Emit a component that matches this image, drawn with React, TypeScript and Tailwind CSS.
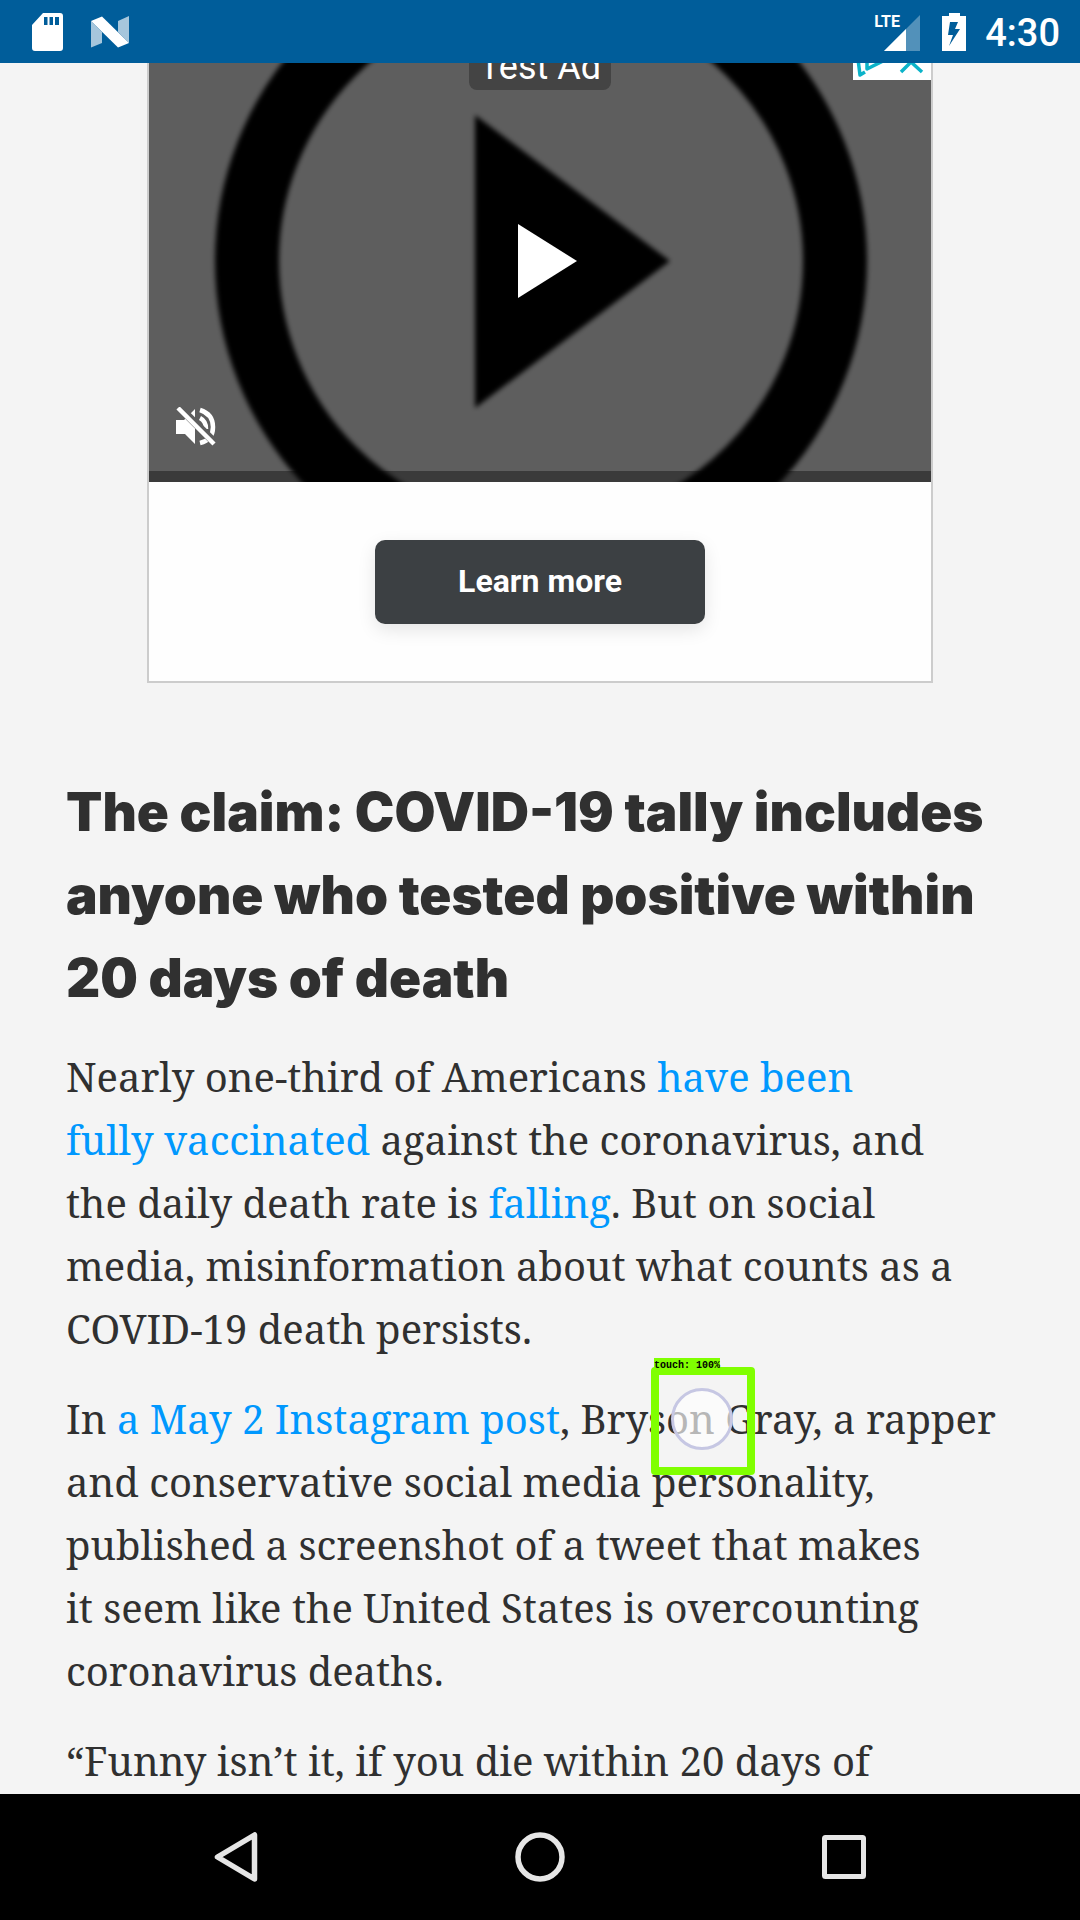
import React from 'react';

const link = 'text-[#0098fe]';

function StatusBar() {
  return (
    <header className="flex h-[63px] shrink-0 items-center justify-between bg-[#005d9a] pr-5 pl-8 text-white">
      <div className="flex items-center gap-7">
        <svg viewBox="0 0 31 38" className="h-[38px] w-[31px]" fill="currentColor" role="img" aria-label="SD card">
          <path
            fillRule="evenodd"
            d="M11 0H28Q31 0 31 3V35Q31 38 28 38H3Q0 38 0 35V12ZM12 4V12H15.500V4ZM17.500 4V12H21V4ZM23 4V12H27V4Z"
          />
        </svg>
        <svg viewBox="0 0 38 32" className="h-8 w-[38px]" fill="currentColor" role="img" aria-label="Android N">
          <path d="M0 5L11 16V27L0 31.500Z" opacity=".65" />
          <path d="M38 0V27L27 16V5Z" opacity=".65" />
          <path d="M0 5L11 0.500L38 27L27 31.500Z" />
        </svg>
      </div>
      <div className="flex items-center">
        <div className="relative h-[38px] w-[46px]">
          <svg viewBox="0 0 36 36" className="absolute right-0 bottom-0 h-9 w-9" fill="currentColor" aria-hidden="true">
            <path d="M36 0V36H0Z" opacity=".32" />
            <path d="M22 14V36H0Z" />
          </svg>
          <span className="absolute top-0 left-0 font-['Liberation_Sans_Narrow',Roboto,sans-serif] text-[16px] leading-[18px] font-bold">
            LTE
          </span>
        </div>
        <svg viewBox="0 0 24 38" className="ml-[22px] h-[38px] w-6" fill="currentColor" role="img" aria-label="Battery charging">
          <path fillRule="evenodd" d="M7 0H18V3H24V38H0V3H7ZM8 9L6 22H11L7 33L18 16H13L16 9Z" />
        </svg>
        <time className="ml-[19px] pt-0.5 font-[Roboto,sans-serif] text-[38px] leading-[44px] font-medium">4:30</time>
      </div>
    </header>
  );
}

function AdCard() {
  return (
    <section aria-label="Advertisement" className="mx-auto w-full max-w-[786px] border-x-2 border-b-2 border-[#cccccc] bg-[#fefefe]">
      <div className="relative h-[419px] overflow-hidden bg-[#5e5e5e]">
        <svg viewBox="0 0 782 419" className="h-full w-full" aria-hidden="true">
          <defs>
            <filter id="soft" x="-10%" y="-10%" width="120%" height="120%">
              <feGaussianBlur stdDeviation="2.5" />
            </filter>
          </defs>
          <path d="M0 408H782V419H0Z" fill="#3a3a3a" />
          <g filter="url(#soft)">
            <circle cx="392" cy="198" r="294" fill="none" stroke="#000" strokeWidth="64" />
            <path d="M326 52V345L521 198Z" />
          </g>
        </svg>
        <span className="absolute top-0 left-1/2 flex h-[27px] w-[142px] -translate-x-1/2 items-end justify-center rounded-b-lg bg-[#444444] font-[Roboto,sans-serif] text-[36px] leading-[46px] whitespace-nowrap text-white">
          Test Ad
        </span>
        <button type="button" aria-label="Ad choices" className="absolute top-0 right-0 h-[17px] w-[78px] bg-white text-[#0bb3c9]">
          <svg viewBox="0 0 78 17" className="h-full w-full" fill="none" stroke="currentColor" strokeWidth="3.500">
            <path d="M5 -4L7 12L12 9M14 -4V6L32 -3" strokeLinejoin="round" />
            <path d="M48 9L58 -1L69 9" />
          </svg>
        </button>
        <button type="button" aria-label="Play" className="absolute top-[161px] left-[369px] text-white">
          <svg viewBox="0 0 59 74" className="h-[74px] w-[59px]" fill="currentColor">
            <path d="M0 0L59 37L0 74Z" />
          </svg>
        </button>
        <button type="button" aria-label="Unmute" className="absolute bottom-[35px] left-[27px] text-white">
          <svg viewBox="0 0 40 40" className="h-10 w-10" fill="currentColor">
            <path d="M0 13H8L19 2V37L9 27H0Z" />
            <g fill="none" stroke="currentColor" strokeWidth="4.500">
              <path d="M24 3Q37 7 37 20Q37 33 24 36" />
              <path d="M24 11Q30 14 30 22" />
            </g>
            <path d="M3 0L39 36" stroke="#5e5e5e" strokeWidth="8" />
            <path d="M2 1L38 37" stroke="currentColor" strokeWidth="4.500" />
          </svg>
        </button>
      </div>
      <div className="flex justify-center pt-[58px] pb-[57px]">
        <button
          type="button"
          className="h-[84px] w-[330px] rounded-[10px] bg-[#3c4043] pb-0.5 font-[Roboto,sans-serif] text-[32px] leading-10 font-bold text-white shadow-[0_6px_18px_rgba(0,0,0,0.1)]"
        >
          Learn more
        </button>
      </div>
    </section>
  );
}

function TouchMarker() {
  return (
    <div className="absolute top-[1304px] left-[651px] h-[108px] w-[104px] rounded-sm border-8 border-[#80ff00]">
      <span className="absolute -top-[17px] -left-[5px] bg-[#80ff00] pt-0.5 font-['Liberation_Mono',monospace] text-[10px] leading-3 font-bold whitespace-nowrap text-black">
        touch: 100%
      </span>
      <div className="absolute top-[13px] left-3 h-[62px] w-[62px] rounded-full border-[3px] border-[#c6c7e3] bg-white/65" />
    </div>
  );
}

function Article() {
  return (
    <article className="px-[66px] pt-[88px] text-[#303030]">
      <h2 className="mb-[25px] font-[Inter,sans-serif] text-[53px] leading-[83px] font-black whitespace-nowrap">
        The claim: COVID-19 tally includes
        <br />
        anyone who tested positive within
        <br />
        20 days of death
      </h2>
      <div className="flex flex-col gap-[27px] font-['Noto_Serif','DejaVu_Serif_Condensed',serif] text-[40px] leading-[63px] whitespace-nowrap">
        <p>
          Nearly one-third of Americans <a href="#vaccinated" className={link}>have been<br />fully vaccinated</a> against the coronavirus, and
          <br />
          the daily death rate is <a href="#falling" className={link}>falling</a>. But on social
          <br />
          media, misinformation about what counts as a
          <br />
          COVID-19 death persists.
        </p>
        <p>
          In <a href="#post" className={link}>a May 2 Instagram post</a>, Bryson Gray, a rapper
          <br />
          and conservative social media personality,
          <br />
          published a screenshot of a tweet that makes
          <br />
          it seem like the United States is overcounting
          <br />
          coronavirus deaths.
        </p>
        <p>“Funny isn’t it, if you die within 20 days of</p>
      </div>
    </article>
  );
}

function NavBar() {
  return (
    <nav className="flex h-[126px] shrink-0 items-center justify-center bg-black text-[#e6e6e6]">
      <button type="button" aria-label="Back" className="flex w-[304px] justify-center">
        <svg viewBox="0 0 60 60" className="h-[60px] w-[60px]" fill="none" stroke="currentColor" strokeWidth="5.500" strokeLinejoin="round">
          <path d="M48.500 8V52L11.500 30Z" />
        </svg>
      </button>
      <button type="button" aria-label="Home" className="flex w-[304px] justify-center">
        <svg viewBox="0 0 60 60" className="h-[60px] w-[60px]" fill="none" stroke="currentColor" strokeWidth="5.500">
          <circle cx="30" cy="30" r="22" />
        </svg>
      </button>
      <button type="button" aria-label="Recent apps" className="flex w-[304px] justify-center">
        <svg viewBox="0 0 60 60" className="h-[60px] w-[60px]" fill="none" stroke="currentColor" strokeWidth="5" strokeLinejoin="round">
          <rect x="10.500" y="10.500" width="39" height="39" rx="1" />
        </svg>
      </button>
    </nav>
  );
}

export default function App() {
  return (
    <div className="flex h-screen flex-col bg-[#f4f4f4]">
      <StatusBar />
      <main className="relative min-h-0 flex-1 overflow-hidden">
        <AdCard />
        <Article />
        <TouchMarker />
      </main>
      <NavBar />
    </div>
  );
}
